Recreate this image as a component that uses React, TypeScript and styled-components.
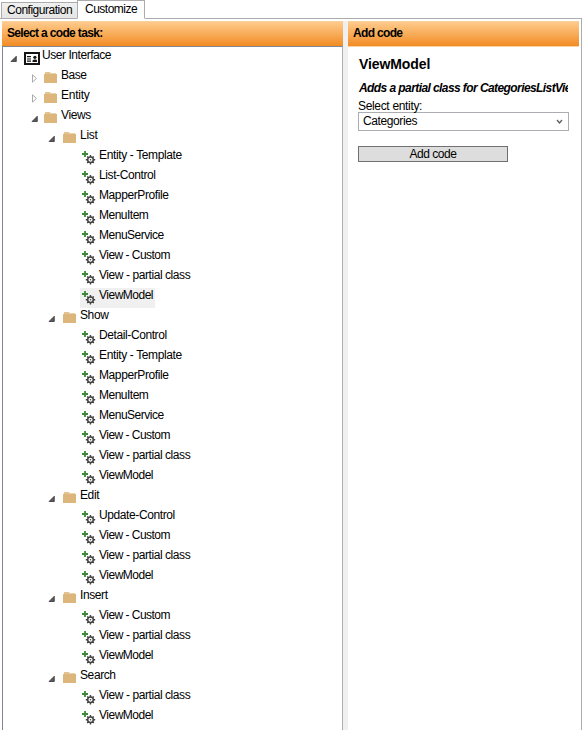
import React from 'react';
import styled, { createGlobalStyle } from 'styled-components';

const GlobalStyle = createGlobalStyle`
  * { box-sizing: border-box; }
  body { margin: 0; background: #fff; overflow: hidden; }
`;

const Page = styled.div`
  width: 582px;
  height: 730px;
  display: flex;
  flex-direction: column;
  overflow: hidden;
  font: 12px/14px "Liberation Sans", Arial, sans-serif;
  color: #000;
  white-space: nowrap;
`;

const TabBar = styled.div`
  height: 19px;
  flex: none;
  display: flex;
  align-items: flex-end;
  padding-left: 1px;
  box-shadow: inset 0 -1px #acacac;
`;

const Tab = styled.div<{ $active?: boolean }>`
  width: ${p => (p.$active ? 68 : 77)}px;
  height: ${p => (p.$active ? 19 : 17)}px;
  margin-left: ${p => (p.$active ? -1 : 0)}px;
  padding: ${p => (p.$active ? '1px 0 0 7px' : '0 0 0 5px')};
  border: 1px solid #acacac;
  border-bottom-color: ${p => (p.$active ? '#fff' : '#acacac')};
  background: ${p => (p.$active ? '#fff' : 'linear-gradient(#f0f0f0, #e5e5e5)')};
  letter-spacing: ${p => (p.$active ? -0.5 : -0.48)}px;
`;

const Body = styled.div`
  flex: 1;
  min-height: 0;
  display: flex;
  padding: 2px 0 0 2px;
  border-right: 1px solid #acacac;
`;

const Pane = styled.section<{ $width: number }>`
  width: ${p => p.$width}px;
  flex: none;
  display: flex;
  flex-direction: column;
`;

const Header = styled.h2`
  height: 26px;
  flex: none;
  margin: 0;
  padding: 4px 0 0 5px;
  background: linear-gradient(#fecb8c, #f28c24);
  border-top: 1px solid #fbd09b;
  border-bottom: 1px solid #fbd3a3;
  font-size: 12px;
  font-weight: bold;
  letter-spacing: -0.66px;
`;

const Splitter = styled.div`
  width: 5px;
  flex: none;
  background: #f0f0f0;
`;

const Tree = styled.div`
  flex: 1;
  border: 1px solid #828790;
  border-right-color: #abadb3;
  border-bottom: 0;
  margin-top: -1px;
`;

const Row = styled.div<{ $indent: number }>`
  height: 20px;
  display: flex;
  padding-left: ${p => p.$indent}px;
`;

const Toggle = styled.svg`
  width: 7px;
  height: 9px;
  margin-top: 7px;
  flex: none;
`;

const IconSlot = styled.span<{ $gap: number; $width: number; $top: number }>`
  width: ${p => p.$width}px;
  height: 20px;
  margin-left: ${p => p.$gap}px;
  padding-top: ${p => p.$top}px;
  flex: none;
  svg { display: block; }
`;

const Label = styled.span<{ $spacing: number }>`
  margin-top: 1px;
  height: 14px;
  letter-spacing: ${p => p.$spacing}px;
`;

const Item = styled.div<{ $selected?: boolean }>`
  display: flex;
  height: 21px;
  width: ${p => (p.$selected ? '75px' : 'auto')};
  background: ${p => (p.$selected ? 'linear-gradient(transparent 1px, #f0f0f0 1px)' : 'transparent')};
`;

const Details = styled.div`
  padding: 8px 10px 0 10px;
`;

const Title = styled.h1`
  margin: 0;
  padding-left: 1px;
  font-size: 14px;
  line-height: 18px;
  letter-spacing: -0.1px;
`;

const Description = styled.p`
  width: 210px;
  margin: 8px 0 4px;
  padding-left: 1px;
  overflow: hidden;
  font-weight: bold;
  font-style: italic;
  letter-spacing: -0.58px;
`;

const FieldLabel = styled.label`
  display: block;
  height: 13px;
  letter-spacing: -0.33px;
`;

const Select = styled.div`
  width: 211px;
  height: 19px;
  display: flex;
  justify-content: space-between;
  padding: 1px 5px 0 4px;
  border: 1px solid #abadb3;
  letter-spacing: -0.4px;
  svg { margin-top: 5px; }
`;

const Button = styled.button`
  display: block;
  width: 150px;
  height: 16px;
  margin: 15px 0 0;
  padding: 0;
  border: 1px solid #707070;
  background: #ddd;
  color: #000;
  font: 12px/14px "Liberation Sans", Arial, sans-serif;
  letter-spacing: -0.45px;
`;

const Folder = () => (
  <svg width="14" height="13" viewBox="0 0 14 13">
    <path d="M1 1h5l1 1h5v2H1z" fill="#ead2aa" />
    <path d="M0 3h13v9H0z" fill="#dcb67a" />
    <path d="M1 1h5v2H1z" fill="#e3c493" />
  </svg>
);

const Card = () => (
  <svg width="16" height="13" viewBox="0 0 16 13">
    <path d="M1 1h14v11H1z" fill="#fff" stroke="#151515" strokeWidth="2" />
    <path d="M3 4h4v1.3H3zM3 6.4h4v1.2H3zM3 8.5h4v1.3H3zM8.5 10V8.4L10 7.5h2.3L13 8.4V10z" fill="#151515" />
    <circle cx="10.9" cy="5.3" r="1.6" fill="#151515" />
  </svg>
);

const AddGear = () => (
  <svg width="14" height="14" viewBox="0 0 14 14">
    <path d="M3 0v6M0 3h6" stroke="#388a34" strokeWidth="1.8" />
    <g stroke="#424242" fill="none">
      <circle cx="8.5" cy="8.7" r="2.8" strokeWidth="1.5" />
      <path d="M8.5 4v2M8.5 11.4v2M3.8 8.7h2M11.2 8.7h2M5.2 5.4l1.4 1.4M10.4 10.6l1.4 1.4M5.2 12l1.4-1.4M10.4 6.8l1.4-1.4" strokeWidth="1.4" />
      <circle cx="8.5" cy="8.7" r=".8" fill="#424242" stroke="none" />
    </g>
  </svg>
);

const Arrow = ({ open }: { open: boolean }) => (
  <Toggle viewBox="0 0 7 9">
    {open
      ? <path d="M6.3 2.2v5.3H1z" fill="#595959" stroke="#262626" strokeWidth=".7" />
      : <path d="M1.5.8v7.4L5.4 4.5z" fill="#fff" stroke="#a0a0a0" strokeWidth=".9" />}
  </Toggle>
);

type Node = { text: string; level: number; open?: boolean; selected?: boolean };

const group = (text: string, items: string[], selected?: string): Node[] => [
  { text, level: 2, open: true },
  ...items.map(item => ({ text: item, level: 3, selected: item === selected })),
];

const nodes: Node[] = [
  { text: 'User Interface', level: 0, open: true },
  { text: 'Base', level: 1, open: false },
  { text: 'Entity', level: 1, open: false },
  { text: 'Views', level: 1, open: true },
  ...group('List', ['Entity - Template', 'List-Control', 'MapperProfile', 'MenuItem', 'MenuService', 'View - Custom', 'View - partial class', 'ViewModel'], 'ViewModel'),
  ...group('Show', ['Detail-Control', 'Entity - Template', 'MapperProfile', 'MenuItem', 'MenuService', 'View - Custom', 'View - partial class', 'ViewModel']),
  ...group('Edit', ['Update-Control', 'View - Custom', 'View - partial class', 'ViewModel']),
  ...group('Insert', ['View - Custom', 'View - partial class', 'ViewModel']),
  ...group('Search', ['View - partial class', 'ViewModel']),
];

const layout = [
  { indent: 7, gap: 7, icon: 18, top: 5 },
  { indent: 28, gap: 6, icon: 17, top: 4 },
  { indent: 45, gap: 8, icon: 17, top: 4 },
  { indent: 77, gap: 2, icon: 17, top: 4 },
];

const spacing: Record<string, number> = {
  Base: -0.5,
  Entity: -0.25,
  List: -0.25,
  'User Interface': -0.45,
  'Entity - Template': -0.37,
  'View - partial class': -0.43,
  'View - Custom': -0.53,
  MenuService: -0.48,
  MenuItem: -0.5,
  ViewModel: -0.5,
};

const TreeRow = ({ node }: { node: Node }) => {
  const { indent, gap, icon, top } = layout[node.level];
  return (
    <Row $indent={indent}>
      {node.open !== undefined && <Arrow open={node.open} />}
      <Item $selected={node.selected}>
        <IconSlot $gap={gap} $width={icon} $top={top}>
          {node.level === 0 ? <Card /> : node.level === 3 ? <AddGear /> : <Folder />}
        </IconSlot>
        <Label $spacing={spacing[node.text] ?? -0.4}>{node.text}</Label>
      </Item>
    </Row>
  );
};

export default function App() {
  return (
    <Page>
      <GlobalStyle />
      <TabBar>
        <Tab>Configuration</Tab>
        <Tab $active>Customize</Tab>
      </TabBar>
      <Body>
        <Pane $width={341}>
          <Header>Select a code task:</Header>
          <Tree>{nodes.map((node, i) => <TreeRow key={i} node={node} />)}</Tree>
        </Pane>
        <Splitter />
        <Pane $width={231}>
          <Header>Add code</Header>
          <Details>
            <Title>ViewModel</Title>
            <Description>Adds a partial class for CategoriesListViewModel</Description>
            <FieldLabel>Select entity:</FieldLabel>
            <Select>
              Categories
              <svg width="7" height="6" viewBox="0 0 7 6">
                <path d="M1 1l2.5 3L6 1" fill="none" stroke="#606060" strokeWidth="1.4" />
              </svg>
            </Select>
            <Button>Add code</Button>
          </Details>
        </Pane>
      </Body>
    </Page>
  );
}
